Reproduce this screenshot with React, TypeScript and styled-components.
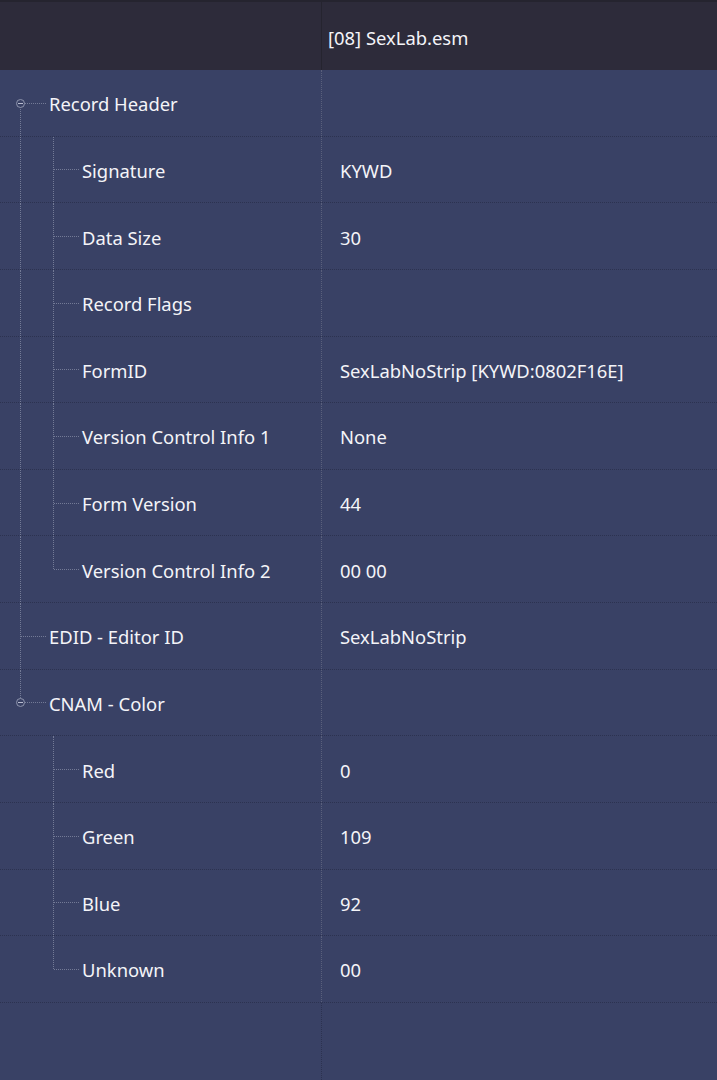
import React from "react";
import styled, { createGlobalStyle, css } from "styled-components";

const Global = createGlobalStyle`
  html, body { margin: 0; padding: 0; background: #394165; }
  body { font-family: "Noto Sans", "Open Sans", sans-serif; }
`;

const ROW_H = 66.64;

const Page = styled.div`
  width: 717px;
  height: 1080px;
  display: flex;
  flex-direction: column;
  background: #394165;
  color: #f4f4f8;
  font-size: 18.4px;
  overflow: hidden;
`;

const Header = styled.div`
  display: grid;
  grid-template-columns: 321px 1fr;
  height: 70px;
  flex: none;
  background: #2d2b3a;
  border-top: 2px solid #25242f;
  box-sizing: border-box;
`;

const HeaderCell = styled.div<{ $sep?: boolean }>`
  display: flex;
  align-items: center;
  padding-left: 6px;
  padding-top: 2px;
  ${(p) => p.$sep && css`border-left: 1px solid #25242f;`}
`;

const Row = styled.div`
  display: grid;
  grid-template-columns: 321px 1fr;
  height: ${ROW_H}px;
  flex: none;
  border-bottom: 1px dotted #2c3250;
  box-sizing: border-box;
`;

const NameCell = styled.div`
  display: flex;
  align-items: stretch;
  height: 100%;
`;

const ValueCell = styled.div`
  display: flex;
  align-items: center;
  padding-left: 18px;
  padding-top: 2px;
  border-left: 1px dotted #5a607c;
`;

type Span = "none" | "full" | "top" | "bottom";

const Guide = styled.div<{ $v: Span; $conn?: boolean }>`
  position: relative;
  width: 33px;
  flex: none;
  &::before {
    content: "";
    position: absolute;
    left: 20px;
    width: 0;
    border-left: 1px dotted #737a96;
    display: ${(p) => (p.$v === "none" ? "none" : "block")};
    top: ${(p) => (p.$v === "bottom" ? "50%" : "0")};
    bottom: ${(p) => (p.$v === "top" ? "50%" : "0")};
  }
  &::after {
    content: "";
    position: absolute;
    left: 21px;
    top: 50%;
    width: 25px;
    border-top: 1px dotted #737a96;
    display: ${(p) => (p.$conn ? "block" : "none")};
  }
`;

const Toggle = styled.span`
  position: absolute;
  left: 16px;
  top: calc(50% - 4px);
  width: 9px;
  height: 9px;
  box-sizing: border-box;
  border-radius: 50%;
  border: 1px solid #8e94ad;
  background: #394165;
  z-index: 1;
  &::after {
    content: "";
    position: absolute;
    left: 1px;
    right: 1px;
    top: 3px;
    height: 1px;
    background: #b8bcd0;
  }
`;

const Label = styled.span`
  display: flex;
  align-items: center;
  margin-left: 16px;
  padding-top: 2px;
  white-space: nowrap;
`;

const Filler = styled.div`
  flex: 1;
  display: grid;
  grid-template-columns: 321px 1fr;
`;

const FillerRight = styled.div`
  border-left: 1px dotted #2c3250;
`;

type Item = {
  label: string;
  value?: string;
  guides: Span[];
  toggle?: boolean;
};

const items: Item[] = [
  { label: "Record Header", guides: ["bottom"], toggle: true },
  { label: "Signature", value: "KYWD", guides: ["full", "full"] },
  { label: "Data Size", value: "30", guides: ["full", "full"] },
  { label: "Record Flags", guides: ["full", "full"] },
  { label: "FormID", value: "SexLabNoStrip [KYWD:0802F16E]", guides: ["full", "full"] },
  { label: "Version Control Info 1", value: "None", guides: ["full", "full"] },
  { label: "Form Version", value: "44", guides: ["full", "full"] },
  { label: "Version Control Info 2", value: "00 00", guides: ["full", "top"] },
  { label: "EDID - Editor ID", value: "SexLabNoStrip", guides: ["full"] },
  { label: "CNAM - Color", guides: ["top"], toggle: true },
  { label: "Red", value: "0", guides: ["none", "full"] },
  { label: "Green", value: "109", guides: ["none", "full"] },
  { label: "Blue", value: "92", guides: ["none", "full"] },
  { label: "Unknown", value: "00", guides: ["none", "top"] },
];

export default function App() {
  return (
    <Page>
      <Global />
      <Header>
        <HeaderCell />
        <HeaderCell $sep>[08] SexLab.esm</HeaderCell>
      </Header>
      {items.map((it) => (
        <Row key={it.label}>
          <NameCell>
            {it.guides.map((g, i) => (
              <Guide key={i} $v={g} $conn={i === it.guides.length - 1}>
                {it.toggle && i === it.guides.length - 1 && <Toggle />}
              </Guide>
            ))}
            <Label>{it.label}</Label>
          </NameCell>
          <ValueCell>{it.value ?? ""}</ValueCell>
        </Row>
      ))}
      <Filler>
        <div />
        <FillerRight />
      </Filler>
    </Page>
  );
}
